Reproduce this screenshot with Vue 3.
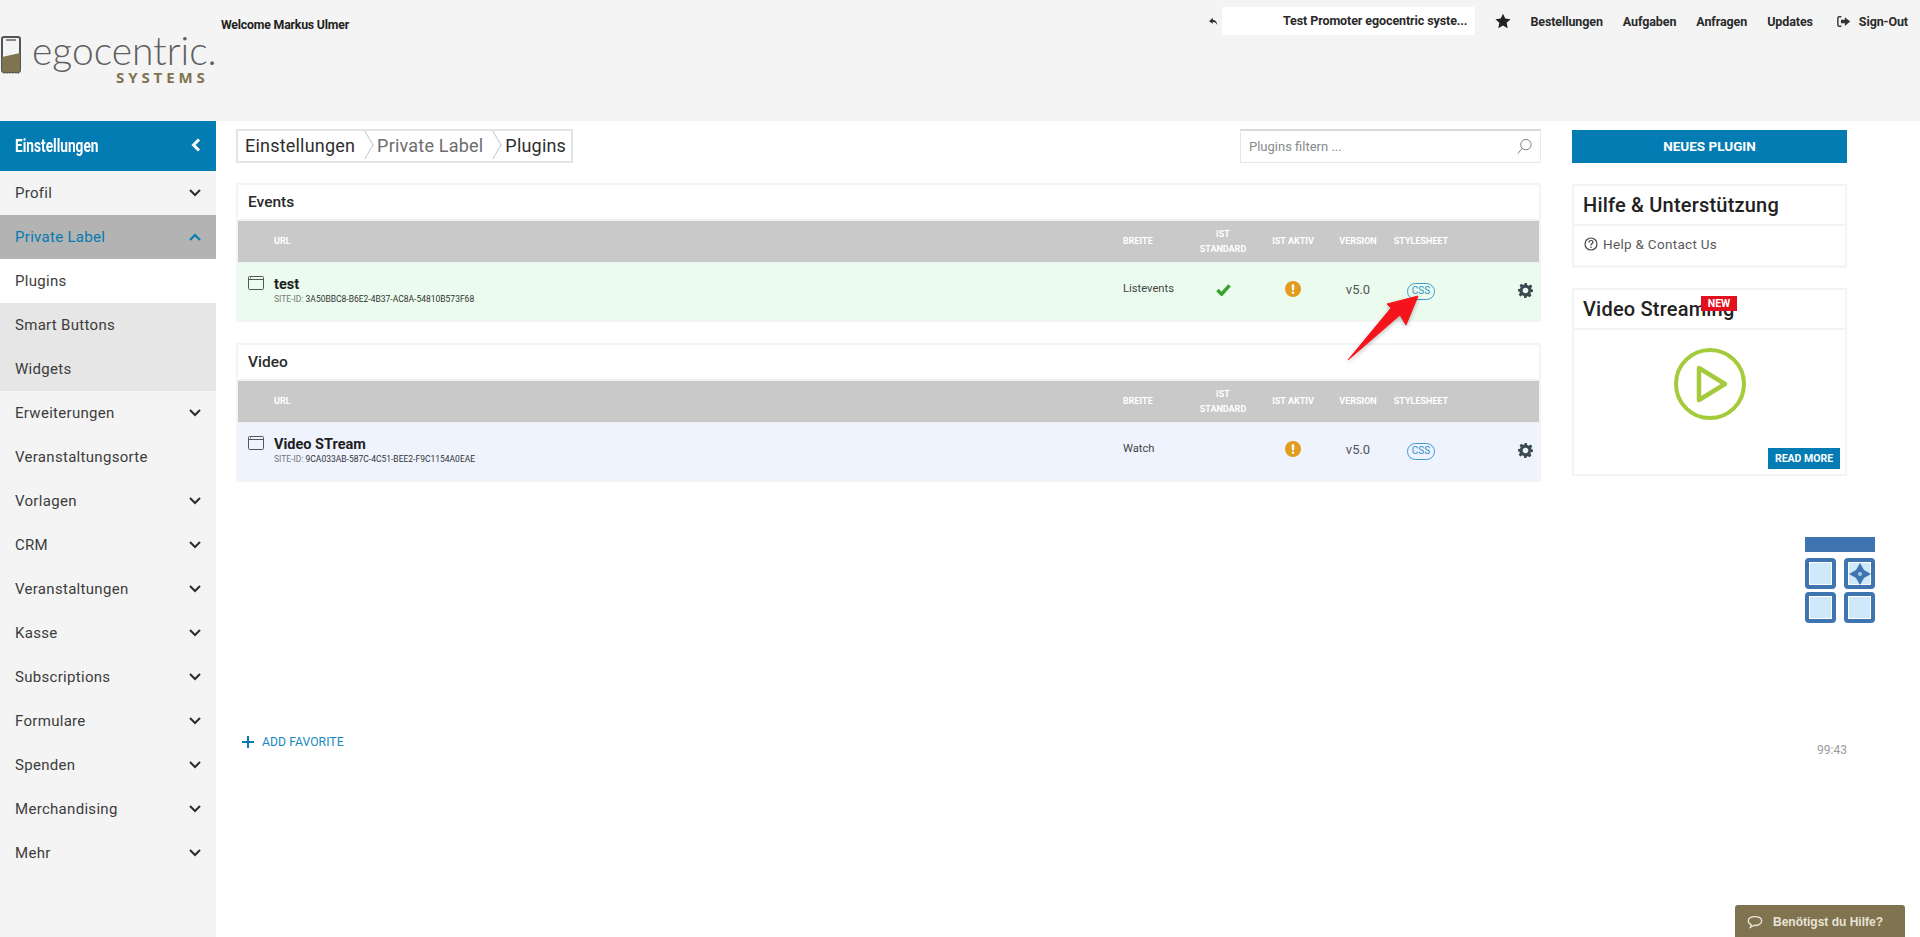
<template>
  <div class="page">
    <header class="topbar">
      <div class="logo">
        <svg class="logo-mark" viewBox="0 0 20 39" width="20" height="39">
          <rect x="1" y="1" width="18" height="35" rx="2" fill="none" stroke="#555" stroke-width="2" />
          <rect x="5" y="3" width="10" height="2" fill="#8a8a8a" />
          <path d="M1 21 L19 17 V34 a2 2 0 0 1 -2 2 H3 a2 2 0 0 1 -2 -2 Z" fill="#7f7350" />
          <path d="M3 36.5 V38 M6 36.5 V38 M9 36.5 V38 M12 36.5 V38 M15 36.5 V38 M17.500 36.5 V38" stroke="#7f7350" stroke-width="1" />
        </svg>
        <div class="logo-text">
          <div class="logo-name">egocentric.</div>
          <div class="logo-sub">SYSTEMS</div>
        </div>
      </div>
      <div class="welcome">Welcome Markus Ulmer</div>
      <div class="top-right">
        <svg class="reply" viewBox="0 0 12 12" width="9" height="9">
          <path d="M5 1 L0 5.500 L5 9 V6.800 C8 6.800 10 8.500 11 11 C11 7 9 4 5 3.600 Z" fill="#333" />
        </svg>
        <div class="promoter">Test Promoter egocentric syste...</div>
        <svg class="star" viewBox="0 0 24 24" width="16" height="16">
          <path d="M12 1 L15.400 8.300 L23.300 9.300 L17.500 14.800 L19 22.800 L12 18.900 L5 22.800 L6.500 14.800 L.7 9.300 L8.600 8.300 Z" fill="#222" />
        </svg>
        <nav class="top-nav">
          <a v-for="link in topLinks" :key="link">{{ link }}</a>
        </nav>
        <div class="signout">
          <svg viewBox="0 0 16 14" width="14" height="13">
            <path d="M5 1.500 H2.500 Q1 1.500 1 3 V11 Q1 12.500 2.500 12.500 H5" fill="none" stroke="#333" stroke-width="1.600" />
            <path d="M4.500 5 H9 V2 L15 7 L9 12 V9 H4.500 Z" fill="#333" />
          </svg>
          <span>Sign-Out</span>
        </div>
      </div>
    </header>

    <div class="layout">
      <aside class="sidebar">
        <div class="side-title">
          <span>Einstellungen</span>
          <svg viewBox="0 0 10 14" width="10" height="14">
            <path d="M8 1.500 L2.500 7 L8 12.500" fill="none" stroke="#fff" stroke-width="3" />
          </svg>
        </div>
        <div
          v-for="item in menu"
          :key="item.label"
          class="side-item"
          :class="item.state"
        >
          <span>{{ item.label }}</span>
          <svg v-if="item.arrow" viewBox="0 0 12 8" width="12" height="8">
            <path
              :d="item.state === 'open' ? 'M1 7 L6 2 L11 7' : 'M1 1 L6 6 L11 1'"
              fill="none"
              stroke="currentColor"
              stroke-width="2"
            />
          </svg>
        </div>
      </aside>

      <main class="main">
        <section class="content">
          <div class="toolbar">
            <div class="crumbs">
              <span>Einstellungen</span>
              <i class="sep"></i>
              <span class="muted">Private Label</span>
              <i class="sep"></i>
              <span>Plugins</span>
            </div>
            <div class="filter">
              <span>Plugins filtern ...</span>
              <svg viewBox="0 0 18 18" width="17" height="17">
                <circle cx="10.500" cy="7" r="5.500" fill="none" stroke="#777" stroke-width="1" />
                <path d="M6.500 11 L2 16.500" stroke="#777" stroke-width="1" />
              </svg>
            </div>
          </div>

          <div v-for="group in groups" :key="group.title" class="panel">
            <div class="panel-title">{{ group.title }}</div>
            <div class="grid-row head">
              <span></span>
              <span>URL</span>
              <span>BREITE</span>
              <span class="center">IST<br />STANDARD</span>
              <span class="center">IST AKTIV</span>
              <span class="center">VERSION</span>
              <span class="center">STYLESHEET</span>
              <span></span>
            </div>
            <div class="grid-row body-row" :class="group.tone">
              <svg class="window" viewBox="0 0 16 14" width="16" height="14">
                <rect x=".5" y=".5" width="15" height="13" rx="1" fill="none" stroke="#555" />
                <path d="M.5 3.500 H15.500" stroke="#555" />
                <path d="M2 2 H3" stroke="#555" />
              </svg>
              <div class="plugin-name">
                <b>{{ group.name }}</b>
                <small><em>SITE-ID:</em> {{ group.siteId }}</small>
              </div>
              <span class="cell">{{ group.width }}</span>
              <span class="center">
                <svg v-if="group.standard" viewBox="0 0 16 14" width="15" height="13">
                  <path d="M1.500 7.500 L6 12 L14.500 2.500" fill="none" stroke="#3aa12c" stroke-width="3.800" />
                </svg>
              </span>
              <span class="center">
                <svg viewBox="0 0 16 16" width="16" height="16">
                  <circle cx="8" cy="8" r="8" fill="#e39b1c" />
                  <rect x="6.800" y="3.200" width="2.400" height="6.300" rx="1" fill="#fff" />
                  <rect x="6.800" y="10.500" width="2.400" height="2.400" rx="1" fill="#fff" />
                </svg>
              </span>
              <span class="center version">v5.0</span>
              <span class="center"><span class="css-pill">CSS</span></span>
              <svg class="gear" viewBox="0 0 24 24" width="15" height="15">
                <path
                  fill-rule="evenodd"
                  d="M10 0 H14 L14.700 3.300 L17.200 4.400 L20.100 2.500 L22.900 5.300 L21 8.200 L22.100 10.700 L24 10 V14 L20.800 14.700 L19.700 17.200 L21.500 20.100 L18.700 22.900 L15.800 21 L13.300 22.100 L14 24 H10 L9.300 20.700 L6.800 19.600 L3.900 21.500 L1.100 18.700 L3 15.800 L1.900 13.300 L0 14 V10 L3.200 9.300 L4.300 6.800 L2.500 3.900 L5.300 1.100 L8.200 3 L10.700 1.900 Z M12 7.500 A4.500 4.500 0 1 0 12.010 7.500 Z"
                  fill="#3a4a50"
                />
              </svg>
            </div>
          </div>

          <div class="favorite">
            <svg viewBox="0 0 12 12" width="12" height="12">
              <path d="M6 0 V12 M0 6 H12" stroke="#037bb3" stroke-width="2" />
            </svg>
            <span>ADD FAVORITE</span>
          </div>
        </section>

        <aside class="rail">
          <div class="new-btn">NEUES PLUGIN</div>

          <div class="panel help">
            <div class="rail-title">Hilfe &amp; Unterstützung</div>
            <div class="help-link">
              <svg viewBox="0 0 14 14" width="14" height="14">
                <circle cx="7" cy="7" r="6" fill="none" stroke="#444" stroke-width="1.200" />
                <path d="M5 5.500 Q5 3.500 7 3.500 Q9 3.500 9 5.200 Q9 6.200 7.800 6.800 Q7 7.200 7 8.500" fill="none" stroke="#444" stroke-width="1.200" />
                <circle cx="7" cy="10.300" r=".8" fill="#444" />
              </svg>
              <span>Help &amp; Contact Us</span>
            </div>
          </div>

          <div class="panel streaming">
            <div class="rail-title">Video Streaming</div>
            <span class="badge">NEW</span>
            <div class="stream-body">
              <svg viewBox="0 0 72 72" width="72" height="72">
                <circle cx="36" cy="36" r="34" fill="none" stroke="#a4cb3c" stroke-width="4" />
                <path d="M25 20 L51 36 L25 52 Z" fill="none" stroke="#a4cb3c" stroke-width="4.500" stroke-linejoin="round" />
              </svg>
              <span class="read-more">READ MORE</span>
            </div>
          </div>

          <div class="clock">99:43</div>
        </aside>
      </main>
    </div>

    <svg class="arrow" viewBox="0 0 80 74" width="80" height="74">
      <path d="M74 2 L62 31 L56 21 L4 66 L47 14 L43 10 Z" fill="#f5141c" stroke="#f5141c" stroke-linejoin="round" />
    </svg>

    <div class="tiles">
      <div class="tiles-bar"></div>
      <div class="tile"></div>
      <div class="tile">
        <svg viewBox="0 0 22 22" width="22" height="22">
          <path d="M11 0 L15 7 L22 11 L15 15 L11 22 L7 15 L0 11 L7 7 Z" fill="#3e75b0" />
          <circle cx="11" cy="11" r="2" fill="#a9c9e6" />
        </svg>
      </div>
      <div class="tile"></div>
      <div class="tile"></div>
    </div>

    <div class="chat">
      <svg viewBox="0 0 18 15" width="16" height="14">
        <path d="M9 1.500 C4.500 1.500 1.500 3.500 1.500 6.500 C1.500 8.500 3 10 4.800 10.800 L3.800 13.500 L7.800 11.400 C13 11.600 16.500 9.500 16.500 6.500 C16.500 3.500 13.500 1.500 9 1.500 Z" fill="none" stroke="#e8e4d8" stroke-width="1.500" />
      </svg>
      <span>Benötigst du Hilfe?</span>
    </div>
  </div>
</template>

<script setup>
const topLinks = ["Bestellungen", "Aufgaben", "Anfragen", "Updates"];

const menu = [
  { label: "Profil", arrow: true },
  { label: "Private Label", arrow: true, state: "open" },
  { label: "Plugins", state: "current" },
  { label: "Smart Buttons", state: "sub" },
  { label: "Widgets", state: "sub" },
  { label: "Erweiterungen", arrow: true },
  { label: "Veranstaltungsorte" },
  { label: "Vorlagen", arrow: true },
  { label: "CRM", arrow: true },
  { label: "Veranstaltungen", arrow: true },
  { label: "Kasse", arrow: true },
  { label: "Subscriptions", arrow: true },
  { label: "Formulare", arrow: true },
  { label: "Spenden", arrow: true },
  { label: "Merchandising", arrow: true },
  { label: "Mehr", arrow: true },
];

const groups = [
  {
    title: "Events",
    name: "test",
    siteId: "3A50BBC8-B6E2-4B37-AC8A-54810B573F68",
    width: "Listevents",
    standard: true,
    tone: "green",
  },
  {
    title: "Video",
    name: "Video STream",
    siteId: "9CA033AB-587C-4C51-BEE2-F9C1154A0EAE",
    width: "Watch",
    standard: false,
    tone: "blue",
  },
];
</script>

<style>
html,
body {
  margin: 0;
  background: #fff;
}
</style>

<style scoped>
.page {
  position: relative;
  height: 937px;
  overflow: hidden;
  font-family: "Roboto", "Noto Sans", sans-serif;
  color: #222;
}

.topbar {
  height: 121px;
  box-sizing: border-box;
  background: #f4f4f4;
  display: flex;
  align-items: flex-start;
}

.logo {
  width: 221px;
  flex-shrink: 0;
  display: flex;
  padding-top: 36px;
  box-sizing: border-box;
}

.logo-mark {
  margin-left: 1px;
  flex-shrink: 0;
}

.logo-text {
  margin-left: 11px;
  width: 185px;
}

.logo-name {
  font-family: "Lato", sans-serif;
  font-weight: 300;
  font-size: 39px;
  line-height: 32px;
  color: #5f5f5f;
  margin-top: -2px;
  white-space: nowrap;
}

.logo-sub {
  font-family: "Open Sans", sans-serif;
  font-weight: 700;
  font-size: 15px;
  letter-spacing: 3.900px;
  line-height: 14px;
  color: #7f7350;
  margin: 4px 0 0 84px;
  white-space: nowrap;
}

.welcome {
  font-size: 12.300px;
  font-weight: 700;
  letter-spacing: -0.2px;
  padding-top: 18px;
  color: #222;
}

.top-right {
  margin-left: auto;
  padding: 7px 12px 0 0;
  display: flex;
  align-items: center;
  height: 28px;
  font-size: 12.500px;
  font-weight: 700;
  color: #2a2a2a;
}

.reply {
  margin-right: 4px;
}

.promoter {
  width: 253px;
  height: 28px;
  box-sizing: border-box;
  padding-right: 8px;
  background: #fff;
  text-align: right;
  line-height: 28px;
  white-space: nowrap;
  letter-spacing: -0.1px;
}

.star {
  margin-left: 20px;
}

.top-nav {
  display: flex;
  gap: 20px;
  margin-left: 19px;
  letter-spacing: -0.1px;
}

.signout {
  display: flex;
  align-items: center;
  gap: 8px;
  margin-left: 24px;
  letter-spacing: -0.1px;
}

.layout {
  display: flex;
  height: 816px;
}

.sidebar {
  width: 216px;
  flex-shrink: 0;
  background: #f4f4f4;
}

.side-title {
  height: 50px;
  box-sizing: border-box;
  padding: 0 15px 2px;
  background: #037bb3;
  color: #fff;
  display: flex;
  align-items: center;
  justify-content: space-between;
  font-size: 19px;
  font-weight: 700;
}

.side-title span {
  transform: scaleX(0.72);
  transform-origin: left center;
}

.side-item {
  height: 44px;
  box-sizing: border-box;
  padding: 0 15px;
  display: flex;
  align-items: center;
  justify-content: space-between;
  font-size: 15px;
  letter-spacing: 0.3px;
  color: #3c3c3c;
}

.side-item svg {
  color: #2c2c2c;
}

.side-item.open {
  background: #b3b3b3;
  color: #037bb3;
}

.side-item.open svg {
  color: #037bb3;
}

.side-item.current {
  background: #fff;
}

.side-item.sub {
  background: #e6e6e6;
}

.main {
  flex: 1;
  display: flex;
  gap: 31px;
  padding: 8px 0 0 20px;
  min-width: 0;
}

.content {
  width: 1305px;
  flex-shrink: 0;
}

.toolbar {
  display: flex;
  justify-content: space-between;
  align-items: flex-start;
  margin-bottom: 20px;
}

.crumbs {
  height: 34px;
  box-sizing: border-box;
  width: 337px;
  padding: 0 7px 2px;
  border: 2px solid #e4e4e4;
  display: flex;
  align-items: center;
  font-size: 18px;
  letter-spacing: 0.2px;
  color: #2e2e2e;
  white-space: nowrap;
}

.crumbs .muted {
  color: #6d6d6d;
}

.sep {
  flex-shrink: 0;
  transform: scaleX(0.6) rotate(45deg);
  border-top: 1px solid #bbb;
  border-right: 1px solid #bbb;
  width: 20px;
  height: 20px;
  box-sizing: border-box;
  margin: 0 2px 0 0;
}

.filter {
  width: 301px;
  height: 34px;
  box-sizing: border-box;
  border: 1px solid #e6e8ee;
  border-top: 2px solid #d8d8de;
  display: flex;
  align-items: center;
  justify-content: space-between;
  padding: 0 7px 0 8px;
  font-size: 13px;
  color: #8a8a8a;
}

.panel {
  border: 2px solid #f4f4f4;
  box-sizing: border-box;
  background: #fff;
}

.content .panel {
  margin-bottom: 21px;
}

.panel-title {
  height: 36px;
  box-sizing: border-box;
  padding-left: 10px;
  font-size: 15.500px;
  font-weight: 500;
  line-height: 34px;
  color: #2a2a2a;
  border-bottom: 2px solid #f0f0f0;
}

.grid-row {
  display: grid;
  grid-template-columns: 36px 849px 64px 72px 68px 62px 64px 86px;
  align-items: center;
}

.head {
  height: 41px;
  background: #c9c9c9;
  color: #fff;
  font-size: 9px;
  font-weight: 700;
  line-height: 15px;
  border-bottom: 1px solid #f0f0f0;
}

.center {
  text-align: center;
  display: flex;
  flex-direction: column;
  align-items: center;
  justify-content: center;
}

.head .center {
  display: block;
}

.body-row {
  height: 57px;
  align-items: start;
}

.body-row.green {
  background: #ebfcee;
}

.body-row.blue {
  background: #eef3fe;
}

.window {
  margin: 13px 0 0 10px;
}

.plugin-name {
  padding-top: 13px;
  display: flex;
  flex-direction: column;
}

.plugin-name b {
  font-size: 14.500px;
  font-weight: 700;
  line-height: 17px;
  color: #1e1e1e;
}

.plugin-name small {
  font-size: 8.500px;
  line-height: 13px;
  color: #333;
  white-space: nowrap;
}

.plugin-name em {
  font-style: normal;
  color: #777;
}

.cell {
  font-size: 11.200px;
  color: #444;
  padding-top: 19px;
}

.body-row .center {
  height: 52px;
}

.version {
  font-size: 13px;
  color: #555;
}

.css-pill {
  box-sizing: border-box;
  width: 28px;
  height: 17px;
  margin-top: 4px;
  border: 1.500px solid #3a9ad0;
  border-radius: 9px;
  font-size: 10px;
  line-height: 14px;
  text-align: center;
  color: #2a8fc8;
}

.gear {
  justify-self: end;
  margin: 20px 6px 0 0;
}

.favorite {
  display: flex;
  align-items: center;
  gap: 8px;
  margin: 253px 0 0 6px;
  font-size: 12.200px;
  letter-spacing: 0.05px;
  color: #1888c0;
}

.rail {
  width: 275px;
  flex-shrink: 0;
}

.new-btn {
  height: 33px;
  margin: 1px 0 21px;
  background: #037bb3;
  color: #fff;
  font-size: 13.500px;
  font-weight: 700;
  line-height: 33px;
  text-align: center;
}

.rail-title {
  height: 40px;
  box-sizing: border-box;
  padding-left: 9px;
  font-size: 20px;
  font-weight: 500;
  line-height: 38px;
  color: #222;
  border-bottom: 2px solid #f4f4f4;
  letter-spacing: 0.2px;
}

.help {
  height: 84px;
  margin-bottom: 20px;
  border-bottom-width: 3px;
}

.help-link {
  display: flex;
  align-items: center;
  gap: 5px;
  height: 36px;
  padding-left: 10px;
  font-size: 13.500px;
  letter-spacing: 0.3px;
  color: #5a5a5a;
}

.streaming {
  position: relative;
  height: 188px;
}

.badge {
  position: absolute;
  left: 127px;
  top: 6px;
  width: 36px;
  height: 15px;
  background: #e2101e;
  color: #fff;
  font-size: 10.500px;
  font-weight: 700;
  line-height: 15px;
  text-align: center;
}

.stream-body {
  position: relative;
  height: 144px;
  display: flex;
  justify-content: center;
  padding-top: 18px;
  box-sizing: border-box;
}

.read-more {
  position: absolute;
  right: 5px;
  bottom: 5px;
  width: 72px;
  height: 21px;
  background: #037bb3;
  color: #fff;
  font-size: 10.500px;
  font-weight: 700;
  line-height: 21px;
  text-align: center;
}

.clock {
  margin-top: 267px;
  text-align: right;
  font-size: 12px;
  color: #9a9a9a;
}

.arrow {
  position: absolute;
  left: 1344px;
  top: 294px;
  filter: drop-shadow(0 2px 2px rgba(0, 0, 0, 0.25));
}

.tiles {
  position: absolute;
  left: 1805px;
  top: 537px;
  width: 70px;
  display: grid;
  grid-template-columns: 31px 31px;
  justify-content: space-between;
  row-gap: 3px;
}

.tiles-bar {
  grid-column: 1 / -1;
  height: 15px;
  margin-bottom: 3px;
  background: #3e75b0;
}

.tile {
  box-sizing: border-box;
  height: 31px;
  border: 4px solid #3e75b0;
  border-radius: 4px;
  background: #cfe9fb;
  box-shadow: inset 0 0 0 1px #fff;
  display: flex;
  align-items: center;
  justify-content: center;
}

.chat {
  position: absolute;
  left: 1735px;
  top: 905px;
  width: 170px;
  height: 32px;
  box-sizing: border-box;
  padding: 2px 0 0 12px;
  background: #7f7350;
  border-radius: 3px 3px 0 0;
  display: flex;
  align-items: center;
  gap: 10px;
  font-family: "Liberation Sans", sans-serif;
  font-size: 12px;
  font-weight: 700;
  color: #e8e4d8;
}
</style>
